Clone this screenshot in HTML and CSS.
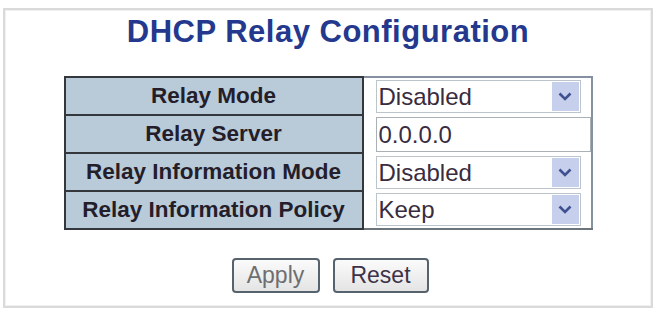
FILE: index.html
```html
<!DOCTYPE html>
<html>
<head>
<meta charset="utf-8">
<link rel="stylesheet" href="styles.css">
</head>
<body>
<div class="frame">
  <h1 class="title">DHCP Relay Configuration</h1>
  <table class="config">
    <tr>
      <td class="label">Relay Mode</td>
      <td class="value">
        <div class="select"><span class="sel-text">Disabled</span><span class="arrow"><svg width="16" height="11" viewBox="0 0 16 11"><path d="M2.5 2.5 L8 8 L13.5 2.5" fill="none" stroke="#3f5190" stroke-width="2.6"/></svg></span></div>
      </td>
    </tr>
    <tr>
      <td class="label">Relay Server</td>
      <td class="value">
        <div class="input">0.0.0.0</div>
      </td>
    </tr>
    <tr>
      <td class="label">Relay Information Mode</td>
      <td class="value">
        <div class="select"><span class="sel-text">Disabled</span><span class="arrow"><svg width="16" height="11" viewBox="0 0 16 11"><path d="M2.5 2.5 L8 8 L13.5 2.5" fill="none" stroke="#3f5190" stroke-width="2.6"/></svg></span></div>
      </td>
    </tr>
    <tr class="last">
      <td class="label">Relay Information Policy</td>
      <td class="value">
        <div class="select"><span class="sel-text">Keep</span><span class="arrow"><svg width="16" height="11" viewBox="0 0 16 11"><path d="M2.5 2.5 L8 8 L13.5 2.5" fill="none" stroke="#3f5190" stroke-width="2.6"/></svg></span></div>
      </td>
    </tr>
  </table>
  <div class="buttons">
    <button class="btn btn-apply">Apply</button>
    <button class="btn btn-reset">Reset</button>
  </div>
</div>
</body>
</html>
```
FILE: styles.css
```css
html, body {
  margin: 0;
  padding: 0;
  background: #ffffff;
}
body {
  font-family: "Liberation Sans", Arial, sans-serif;
}
.frame {
  margin: 8px 3px 0 3px;
  height: 300px;
  box-sizing: border-box;
  border: 2px solid #dadada;
  box-shadow: inset 0 0 0 1px #f0f0f0;
}
.title {
  margin: 5px 0 0 0;
  font-size: 31px;
  line-height: 34px;
  font-weight: bold;
  letter-spacing: 0.5px;
  color: #24398d;
  text-align: center;
}
.config {
  margin: 27px auto 0 auto;
  border-collapse: collapse;
  border: 2px solid #8590a0;
  width: 529px;
}
.config tr {
  height: 38px;
}
.label {
  width: 296px;
  padding: 0;
  border: 2px solid #34383c;
  background: #b9cad9;
  color: #241e2a;
  font-weight: bold;
  font-size: 22.5px;
  text-align: center;
  white-space: nowrap;
}
.value {
  padding: 0 0 0 12px;
  background: #ffffff;
}
.last .value {
  border-bottom: 2px solid #6c747c;
}
.select {
  display: flex;
  align-items: center;
  justify-content: space-between;
  width: 205px;
  height: 33px;
  box-sizing: border-box;
  border: 1px solid #bcc4cc;
  background: #ffffff;
}
.sel-text {
  padding-left: 2px;
  font-size: 24px;
  line-height: 31px;
  color: #3a2c40;
}
.arrow {
  display: flex;
  align-items: center;
  justify-content: center;
  width: 27px;
  height: 29px;
  margin-right: 1px;
  background: #c6cfeb;
}
.input {
  width: 215px;
  height: 35px;
  box-sizing: border-box;
  border: 1px solid #a9b0b6;
  padding-left: 2px;
  font-size: 24px;
  line-height: 33px;
  color: #3a2c40;
}
.buttons {
  display: flex;
  justify-content: center;
  gap: 13px;
  margin-top: 28px;
  padding-left: 4px;
}
.btn {
  height: 35px;
  box-sizing: border-box;
  border: 2px solid #56636f;
  border-radius: 4px;
  background: linear-gradient(#fbfbfb, #e4e4e4);
  font-family: "Liberation Sans", Arial, sans-serif;
  font-size: 23px;
  line-height: 31px;
  padding: 0;
}
.btn-apply {
  width: 88px;
  color: #6e6e70;
}
.btn-reset {
  width: 96px;
  color: #3d3248;
}
```
